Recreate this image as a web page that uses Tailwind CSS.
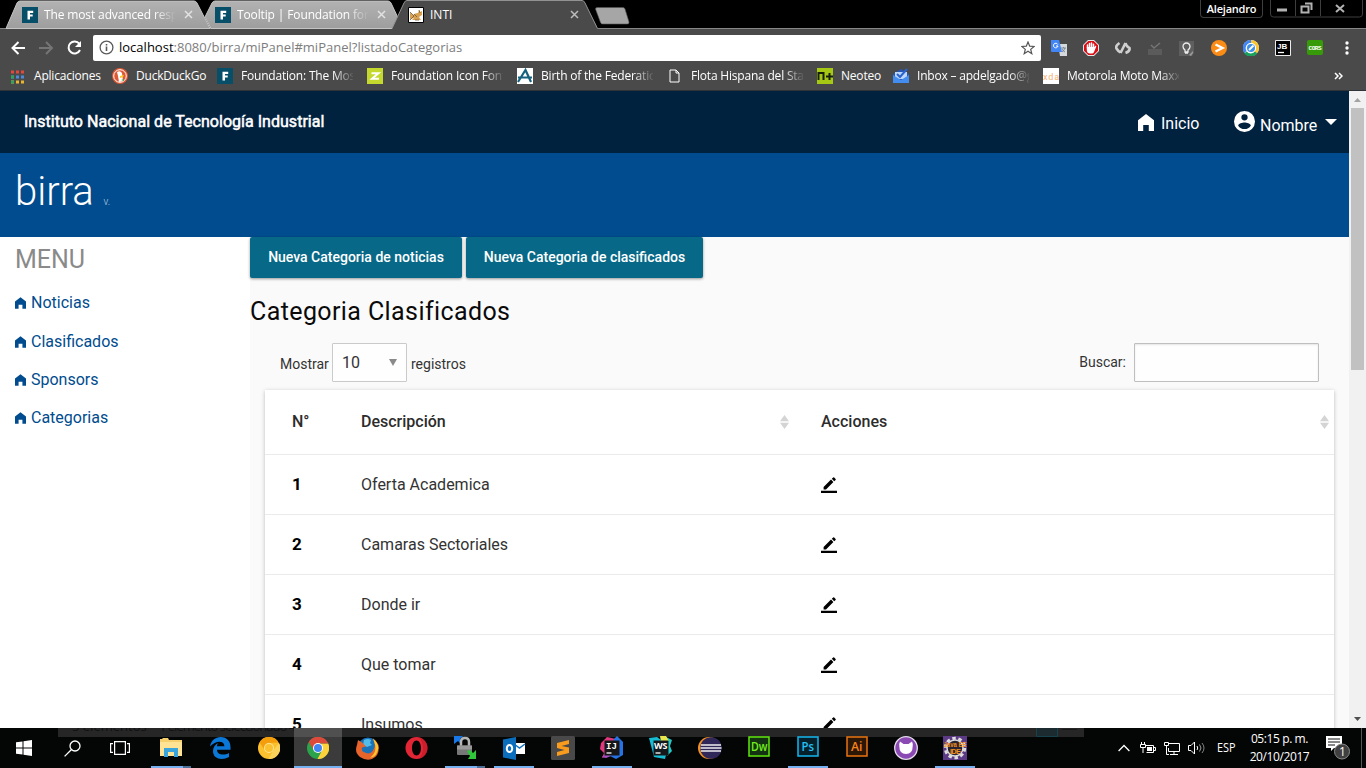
<!DOCTYPE html>
<html lang="es">
<head>
<meta charset="utf-8">
<title>INTI</title>
<script src="https://cdn.jsdelivr.net/npm/@tailwindcss/browser@4"></script>
</head>
<body class="w-[1366px] h-[768px] overflow-hidden bg-black flex flex-col font-['Open_Sans',sans-serif] text-[12px]">
<svg class="hidden">
  <symbol id="home" viewBox="0 0 16 17"><path d="M8 0 0 6.2V17h5.2v-6h5.6v6H16V6.2z" fill="currentColor"/></symbol>
  <symbol id="pen" viewBox="0 0 16 16"><path d="M2.6 12.6V10L10 2.6l2.4 2.4L5 12.6zM10.8 1.8 12.2.5q.5-.4 1 0l1.4 1.4q.4.5 0 1l-1.4 1.3zM0 13.8h16V16H0z" fill="currentColor"/></symbol>
  <symbol id="sort" viewBox="0 0 9 14"><path d="M4.500 0 9 6.300H0zM0 7.700h9L4.500 14z" fill="#d4d4d4"/></symbol>
  <symbol id="fnd" viewBox="0 0 16 16"><path d="M0 0h16v16H0z" fill="#074e68"/><path d="M5.500 3.800h5.700V6H8v1.600h2.700v2H8v2.900H5.500z" fill="#fff"/></symbol>
  <symbol id="x" viewBox="0 0 9 9"><path d="m1 1 7 7M8 1 1 8" stroke="currentColor" stroke-width="1.500"/></symbol>
</svg>

<!-- Tab strip -->
<header class="relative h-[29px] shrink-0 bg-black text-white">
  <svg class="absolute left-0 top-0" width="1366" height="29">
    <defs><linearGradient id="tg" x2="0" y2="1"><stop stop-color="#b2b2b2"/><stop offset="1" stop-color="#9e9e9e"/></linearGradient></defs>
    <path d="M0 28.500h1366" stroke="#868686"/>
    <path d="M205 17 212 3q1-2 3-2h173q2 0 3 2l12 25.500H211z" fill="url(#tg)" stroke="#c4c4c4"/>
    <path d="M6 28.500 17 3q1-2 3-2h174q2 0 3 2l13 25.500z" fill="url(#tg)" stroke="#c4c4c4"/>
    <path d="M392 29 404 3q1-2.500 3-2.500h175q2 0 3 2.500l13 26z" fill="#4a4a4a"/>
    <path d="M392 28.500 404 3q1-2.500 3-2.500h175q2 0 3 2.500l12.500 25.500" fill="none" stroke="#929292"/>
    <path d="M595.500 9q0-1.500 1.500-1.500h26q1.500 0 2 1.500l4 13q.4 2-1.500 2h-25q-1.500 0-2-1.500z" fill="#a6a6a6" stroke="#555" stroke-width=".6"/>
  </svg>
  <div class="relative flex h-[29px] items-center pl-[22px]">
    <div class="flex items-center w-[193px]"><svg class="w-4 h-4 mr-[6px]"><use href="#fnd"/></svg><span class="w-[134px] overflow-hidden whitespace-nowrap tracking-[-0.13px] [mask-image:linear-gradient(to_right,#000_110px,transparent_132px)]">The most advanced respo</span><svg class="w-[9px] h-[9px] ml-[6px] text-[#e2e2e2]"><use href="#x"/></svg></div>
    <div class="flex items-center w-[193px]"><svg class="w-4 h-4 mr-[6px]"><use href="#fnd"/></svg><span class="w-[134px] overflow-hidden whitespace-nowrap tracking-[-0.13px] [mask-image:linear-gradient(to_right,#000_110px,transparent_132px)]">Tooltip | Foundation for Si</span><svg class="w-[9px] h-[9px] ml-[6px] text-[#e2e2e2]"><use href="#x"/></svg></div>
    <div class="flex items-center w-[193px]"><svg class="w-4 h-4 mr-[6px]" viewBox="0 0 16 16"><path d="M.5.500h15v15H.5z" fill="#fff" stroke="#000"/><path d="M2 5.500 5 8q2-2 5-2l1-3 1 2 2-1v4l-3 2 2 3H4l2-2-4 1z" fill="#d9a252"/><path d="m2 5 4 4-4 4m4-6 3 3m2-7 1 3m-5 7h4" stroke="#6c5a3e" fill="none" stroke-width=".8"/></svg><span class="w-[140px]">INTI</span><svg class="w-[9px] h-[9px] text-[#bdbdbd]"><use href="#x"/></svg></div>
  </div>
  <div class="absolute right-0 top-0 flex h-[18px]">
    <div class="w-[63px] h-[18px] border border-t-0 border-[#3e3e3e] rounded-b text-center text-[11px] leading-[18px] font-semibold tracking-[-0.2px] mr-[7px]">Alejandro</div>
    <svg width="96" height="18" fill="none"><path d="M.5 0v14q0 3 3 3h86q3 0 3-3V0M25.500 0v16M50.500 0v16" stroke="#3e3e3e"/><path d="M7 8.500h10v3H7z" fill="#b2b2b2"/><path d="M35 3.500h6.500V10M31.500 6.500h7v6h-7z" stroke="#b2b2b2" stroke-width="2"/><path d="m66 5 8 7m0-7-8 7" stroke="#b2b2b2" stroke-width="2"/></svg>
  </div>
</header>

<!-- Toolbar -->
<div class="h-[33px] shrink-0 bg-[#4a4a4a] flex items-center pt-1 pl-[10px]">
  <svg width="83" height="20" fill="none" stroke-width="2"><path d="M15 10H2.500M8.500 4l-6 6 6 6" stroke="#fff"/><path d="M29 10h12.500M36 4l6 6-6 6" stroke="#757575"/><path d="M69.300 5.700A6 6 0 1 0 70 12" stroke="#fff"/><path d="M71 3v6h-6z" fill="#fff"/></svg>
  <div class="w-[948px] h-[26px] bg-white rounded-[2px] flex items-center pl-[6px] mr-[10px]">
    <svg width="15" height="15" fill="none" stroke="#5a5a5a"><circle cx="7.500" cy="7.500" r="6.400" stroke-width="1.300"/><path d="M7.500 6.500V11M7.500 4v1.500" stroke-width="1.600"/></svg>
    <span class="ml-[5px] text-[13px] tracking-[0.01px] text-[#7d7d7d] flex-1"><span class="text-black">localhost</span>:8080/birra/miPanel#miPanel?listadoCategorias</span>
    <svg class="mr-[6px]" width="14" height="14" viewBox="0 0 14 14"><path d="m7 1 1.700 4.200 4.500.3-3.500 2.900 1.100 4.300L7 10.300l-3.800 2.400 1.100-4.300L.8 5.500l4.500-.3z" fill="none" stroke="#555" stroke-width="1.200"/></svg>
  </div>
  <div class="flex gap-4">
    <svg width="16" height="16"><path d="M7 4h9v12H9z" fill="#d5d9dd"/><path d="M0 0h8l3 12H1q-1 0-1-1z" fill="#4285f4"/><path d="M6.800 4.500A2.300 2.300 0 1 0 7 6H5" stroke="#fff" fill="none"/><path d="M10 8h5m-2.500-1v1m1.500 0q-1 3-3 4m0-3q1 2 3 3" stroke="#6b7a86" fill="none" stroke-width=".8"/></svg>
    <svg width="16" height="16"><path d="M5 0h6l5 5v6l-5 5H5l-5-5V5z" fill="#e5e5e5"/><path d="M5.300 1h5.400L15 5.300v5.400L10.700 15H5.300L1 10.700V5.300z" fill="#d80f16"/><path d="M4.500 8V5m2 3V3.500m2 4V3m2 5V4.200" stroke="#fff" stroke-width="1.500" stroke-linecap="round"/><path d="M3.800 7h7.400l1.600-1.400.5.800L11 12q-.6 1.500-2 1.500H7q-3 0-3.200-3.500z" fill="#fff"/></svg>
    <svg width="16" height="16" fill="none" stroke="#cfcfcf" stroke-width="2.600"><path d="M4.500 3Q0 6 1.500 8.500t4 4M10.500 3l-5 10M10.500 3q1 4 4 5 .8 3-4 5"/></svg>
    <svg width="16" height="16"><path d="M1 9h14v6H1z" fill="#5b5b5b"/><path d="m4 5 3 3 6-5" fill="none" stroke="#747474" stroke-width="1.500"/></svg>
    <svg width="16" height="16"><path d="M0 1h15v12l-2 3H0z" fill="#5f5f5f"/><path d="M6 10q-2-1.500-2-3.500a3.500 3.500 0 0 1 7 0q0 2-2 3.500v2H6zM6 13h3" fill="none" stroke="#eee" stroke-width="1.300"/><path d="m10 15 4-4v2l-2 3z" fill="#999"/></svg>
    <svg width="16" height="16"><circle cx="8" cy="8" r="8" fill="#fb8c16"/><path d="m4.500 4.500 7 3.500-7 3.500" fill="none" stroke="#fff" stroke-width="2.400"/></svg>
    <svg width="16" height="16" fill="none"><circle cx="8" cy="8" r="8" fill="#fff"/><path d="M2.500 12A6.600 6.600 0 0 1 8 1.500" stroke="#4285f4" stroke-width="3"/><path d="M8 1.500A6.500 6.500 0 0 1 12 13" stroke="#fbc52d" stroke-width="3"/><path d="M13 12.300a6.500 6.500 0 0 1-10.500 0" stroke="#18a05d" stroke-width="3"/><circle cx="8" cy="8" r="5" fill="#fff"/><circle cx="8" cy="8" r="4" fill="#3e91e8"/><path d="m6 10 4.500-4.500" stroke="#fff" stroke-width="1.800"/></svg>
    <svg width="16" height="16"><path d="M.5.500h15v15H.5z" stroke="#ececec"/><text x="2" y="8.500" fill="#fff" font-size="8" font-weight="700" font-family="Liberation Sans">JB</text><path d="M3 12.500h6" stroke="#fff" stroke-width="1.300"/></svg>
    <svg width="16" height="16"><rect width="16" height="15" rx="2" fill="#379a08"/><text x="1.500" y="10" fill="#fff" font-size="6" font-weight="700" textLength="13" font-family="Liberation Mono">CORS</text></svg>
    <svg class="ml-[6px]" width="4" height="16" fill="#fff"><circle cx="2" cy="3" r="1.700"/><circle cx="2" cy="8" r="1.700"/><circle cx="2" cy="13" r="1.700"/></svg>
  </div>
</div>

<!-- Bookmarks -->
<nav class="h-[29px] shrink-0 bg-[#4a4a4a] border-b border-[#303338] flex items-center pl-[10px] text-white whitespace-nowrap tracking-[-0.2px]">
  <div class="flex items-center w-[102px]"><svg class="mr-[9px]" width="15" height="15"><path d="M1 3h13" stroke="#e4473c" stroke-width="3" stroke-dasharray="3 2"/><path d="M1 8h13" stroke="#4c8bdc" stroke-width="3" stroke-dasharray="3 2"/><path d="M1 13h13" stroke="#ecb52f" stroke-width="3" stroke-dasharray="3 2"/><path d="M1 6.500h3v3H1zM1 11.500h3v3H1z" fill="#2ea35b"/></svg>Aplicaciones</div>
  <div class="flex items-center w-[105px]"><svg class="mr-2" width="16" height="16"><circle cx="8" cy="8" r="8" fill="#de5833"/><circle cx="8" cy="8" r="6.300" fill="none" stroke="#fff"/><path d="M5 4q3-2 5 1l1 8-4 1-1-6z" fill="#fff"/><path d="m8 8 4-1-1 2-3 1z" fill="#ffc91e"/><path d="m9 12 3-1v2z" fill="#44a047"/></svg>DuckDuckGo</div>
  <div class="flex items-center w-[150px]"><svg class="w-4 h-4 mr-2"><use href="#fnd"/></svg><span class="w-[112px] overflow-hidden [mask-image:linear-gradient(to_right,#000_92px,transparent_114px)]">Foundation: The Most</span></div>
  <div class="flex items-center w-[150px]"><svg class="mr-2" width="16" height="16"><path d="M0 0h16v16H0z" fill="#c4d82e"/><path d="M4.500 5.200h7L5 10.800h7" fill="none" stroke="#fff" stroke-width="2"/></svg><span class="w-[112px] overflow-hidden [mask-image:linear-gradient(to_right,#000_92px,transparent_114px)]">Foundation Icon Fonts</span></div>
  <div class="flex items-center w-[150px]"><svg class="mr-2" width="16" height="16"><path d="M0 0h16v16H0z" fill="#fff"/><path d="M1 14 8.500 2l5.500 12M1 9.500h14" stroke="#16617e" stroke-width="2.200" fill="none"/></svg><span class="w-[112px] overflow-hidden [mask-image:linear-gradient(to_right,#000_92px,transparent_114px)]">Birth of the Federation</span></div>
  <div class="flex items-center w-[150px] pl-[2px]"><svg class="mr-[11px]" width="11" height="14"><path d="M1 1h6l3 3v9H1zM7 1v3h3" stroke="#fff" fill="none"/></svg><span class="w-[112px] overflow-hidden [mask-image:linear-gradient(to_right,#000_92px,transparent_114px)]">Flota Hispana del Star</span></div>
  <div class="flex items-center w-[76px]"><svg class="mr-2" width="16" height="16"><path d="M0 0h16v16H0z" fill="#a4c814"/><path d="M1.500 12V5h5v7M9 8.500h7M12.500 5v7" stroke="#16200a" stroke-width="2" fill="none"/></svg>Neoteo</div>
  <div class="flex items-center w-[150px]"><svg class="mr-2" width="16" height="16"><path d="m0 6 8-5 8 5v9H0z" fill="#2457b8"/><path d="M2 4h12v7H2z" fill="#bdd7fb"/><path d="m4 6 3 3 7-8" stroke="#2b63cf" stroke-width="2" fill="none"/><path d="m0 7 8 5 8-5v8H0z" fill="#438cf0"/></svg><span class="w-[112px] overflow-hidden [mask-image:linear-gradient(to_right,#000_92px,transparent_114px)]">Inbox – apdelgado@g</span></div>
  <div class="flex items-center w-[291px]"><svg class="mr-2" width="16" height="16"><path d="M0 0h16v16H0z" fill="#fff"/><text x="0" y="11.500" font-size="9" textLength="16" fill="#f4b177" font-family="Roboto">xda</text></svg><span class="w-[112px] overflow-hidden [mask-image:linear-gradient(to_right,#000_92px,transparent_114px)]">Motorola Moto Maxx X</span></div>
  <svg width="9" height="8"><path d="m1 1 3 3-3 3m4-6 3 3-3 3" fill="none" stroke="#fff" stroke-width="1.500"/></svg>
</nav>

<!-- Page -->
<div class="h-[637px] shrink-0 flex overflow-hidden font-[Roboto,sans-serif] text-[16px] bg-[#fafafa]">
  <div class="w-[1349px] shrink-0">
    <div class="h-[62px] bg-[#00223f] text-white flex items-center pl-6">
      <div class="w-[1114px] tracking-[0.02px] [-webkit-text-stroke:0.5px_white]">Instituto Nacional de Tecnología Industrial</div>
      <svg class="w-4 h-[17px] mr-[7px]"><use href="#home"/></svg><span class="w-[73px] pt-[3px]">Inicio</span>
      <svg class="mr-[5px] -mt-px" width="21" height="21" viewBox="2 2 20 20"><path fill="#fff" d="M12 2a10 10 0 1 0 0 20 10 10 0 0 0 0-20zm0 3a3 3 0 1 1 0 6 3 3 0 0 1 0-6zm0 14.200a7.200 7.200 0 0 1-6-3.200c0-2 4-3.100 6-3.100s6 1.100 6 3.100a7.200 7.200 0 0 1-6 3.200z"/></svg><span class="pt-[7px] w-[65px]">Nombre</span>
      <svg width="12" height="6"><path d="M0 0h12L6 6z" fill="#fff"/></svg>
    </div>
    <div class="h-[84px] bg-[#004c8e] text-white pl-[15px] pt-[11px] font-light text-[40px] leading-[56px]">birra <span class="text-[10px] text-[#b8cfe2]">v.</span></div>
    <div class="flex h-[491px]">
      <aside class="w-[250px] bg-white pl-[15px] text-[#004c8e]">
        <h2 class="text-[25px] leading-[35px] pt-[5px] text-[#8a8a8a]">MENU</h2>
        <div class="mt-[7px] flex flex-col">
          <a class="h-[38.400px] flex items-center"><svg class="w-[11px] h-3 mr-[5px]"><use href="#home"/></svg>Noticias</a>
          <a class="h-[38.400px] flex items-center"><svg class="w-[11px] h-3 mr-[5px]"><use href="#home"/></svg>Clasificados</a>
          <a class="h-[38.400px] flex items-center"><svg class="w-[11px] h-3 mr-[5px]"><use href="#home"/></svg>Sponsors</a>
          <a class="h-[38.400px] flex items-center"><svg class="w-[11px] h-3 mr-[5px]"><use href="#home"/></svg>Categorias</a>
        </div>
      </aside>
      <main class="flex-1">
        <div class="flex gap-1 text-white font-medium text-[14px]">
          <div class="h-[41px] w-[212px] bg-[#076987] rounded-[2px] shadow-[0_1px_3px_rgba(0,0,0,.4)] flex items-center justify-center">Nueva Categoria de noticias</div>
          <div class="h-[41px] w-[237px] bg-[#076987] rounded-[2px] shadow-[0_1px_3px_rgba(0,0,0,.4)] flex items-center justify-center">Nueva Categoria de clasificados</div>
        </div>
        <h1 class="text-[25px] leading-[35px] mt-4 text-[#0a0a0a] tracking-[0.4px]">Categoria Clasificados</h1>
        <div class="mt-[14px] h-[39px] flex items-center pl-[30px] pr-[30px] text-[14px] text-[#333]">
          <span class="w-[52px] pt-[3px]">Mostrar</span>
          <div class="w-[75px] h-[39px] border border-[#cacaca] rounded-[1px] bg-[#fefefe] flex items-center justify-between pl-[9px] pr-[9px] text-[16px]">10<svg width="8" height="7"><path d="M0 0h8L4 7z" fill="#8a8a8a"/></svg></div>
          <span class="ml-1 flex-1 pt-[3px]">registros</span>
          <span class="mr-2">Buscar:</span>
          <div class="w-[185px] h-[39px] border border-[#bfbfbf] rounded-[1px] bg-[#fefefe] shadow-[inset_0_1px_2px_rgba(10,10,10,.1)]"></div>
        </div>
        <div class="ml-[15px] mt-2 w-[1069px] h-[400px] bg-white shadow-[0_1px_4px_rgba(0,0,0,.25)] text-[#333]">
          <div class="h-[65px] border-b border-[#ebebeb] flex items-center font-medium text-[#2c2c2c]"><span class="w-[69px] ml-[27px]">N°</span><span class="w-[419px]">Descripción</span><svg class="w-[9px] h-[14px] mr-8"><use href="#sort"/></svg><span class="w-[499px]">Acciones</span><svg class="w-[9px] h-[14px]"><use href="#sort"/></svg></div>
          <div class="h-[60px] border-b border-[#ebebeb] flex items-center"><b class="w-[69px] ml-[27px] text-[17px] text-black">1</b><span class="w-[460px]">Oferta Academica</span><svg class="w-4 h-4 text-black"><use href="#pen"/></svg></div>
          <div class="h-[60px] border-b border-[#ebebeb] flex items-center"><b class="w-[69px] ml-[27px] text-[17px] text-black">2</b><span class="w-[460px]">Camaras Sectoriales</span><svg class="w-4 h-4 text-black"><use href="#pen"/></svg></div>
          <div class="h-[60px] border-b border-[#ebebeb] flex items-center"><b class="w-[69px] ml-[27px] text-[17px] text-black">3</b><span class="w-[460px]">Donde ir</span><svg class="w-4 h-4 text-black"><use href="#pen"/></svg></div>
          <div class="h-[60px] border-b border-[#ebebeb] flex items-center"><b class="w-[69px] ml-[27px] text-[17px] text-black">4</b><span class="w-[460px]">Que tomar</span><svg class="w-4 h-4 text-black"><use href="#pen"/></svg></div>
          <div class="h-[60px] border-b border-[#ebebeb] flex items-center"><b class="w-[69px] ml-[27px] text-[17px] text-black">5</b><span class="w-[460px]">Insumos</span><svg class="w-4 h-4 text-black"><use href="#pen"/></svg></div>
        </div>
      </main>
    </div>
  </div>
  <div class="w-[17px] bg-[#f1f1f1] flex flex-col items-center">
    <svg class="mt-[7px] mb-[6px] shrink-0" width="7" height="4"><path d="M0 4h7L3.500 0z" fill="#a3a3a3"/></svg>
    <div class="w-[13px] h-[262px] bg-[#c1c1c1]"></div>
    <svg class="mt-auto mb-[7px]" width="7" height="4"><path d="M0 0h7L3.500 4z" fill="#505050"/></svg>
  </div>
</div>

<!-- Taskbar -->
<footer class="relative h-10 shrink-0 bg-[#040605] text-white flex overflow-hidden">
  <div class="absolute left-[58px] top-0 w-[1026px] h-[9px] bg-[#262626] overflow-hidden text-[#0d0f10] text-[13px]">
    <svg width="1026" height="9"><g fill="#101214" font-size="13" font-family="Open Sans"><text x="14" y="3">5 elementos</text><text x="101" y="3" textLength="169">1 elemento seleccionado 4,44 KB</text></g><path d="M978.500 0v8.500h21V0" fill="#1c2b30" stroke="#17414c"/><path d="M1004 1.500h15" stroke="#181818"/></svg>
  </div>
  <div class="relative flex w-full items-stretch">
    <div class="w-12 flex items-center justify-center"><svg width="16" height="16" fill="#fff"><path d="m0 2.300 6.500-.9v6.100H0zM7.500 1.200 16 0v7.500H7.500zM0 8.500h6.500v6.100L0 13.700zM7.500 8.500H16V16l-8.500-1.200z"/></svg></div>
    <div class="w-12 flex items-center justify-center"><svg width="17" height="17" fill="none" stroke="#fff" stroke-width="1.300"><circle cx="11" cy="6" r="5"/><path d="M7.500 9.500.6 16.400"/></svg></div>
    <div class="w-12 flex items-center justify-center mr-[3px]"><svg width="20" height="14" fill="none" stroke="#fff" stroke-width="1.200"><path d="M4.600.600h10.800v12.800H4.600zM3 2.600H.6v8.800H3M17 2.600h2.400v8.800H17"/></svg></div>

    <div class="relative w-12 mr-px flex items-center justify-center"><svg width="22" height="20"><path d="M0 1h2l1-1h5l1 2h13v15H0z" fill="#f5d06c"/><path d="M0 4h22v14H0z" fill="#fde393"/><path d="M4 10h14v9h-4v-5H8v5H4z" fill="#3aa5dc"/></svg><i class="absolute bottom-0 left-1 w-8 h-[2px] bg-[#76b0f0]"></i><i class="absolute bottom-0 left-9 w-2 h-[2px] bg-[#4c6f98]"></i></div>
    <div class="w-12 mr-px flex items-center justify-center"><svg width="21" height="22" viewBox="0 0 21 22"><path d="M0 9.500C1 3.500 5.500 0 10.700 0 17 0 20.500 4.500 20.500 10v2.700H7c0 5.500 7.500 6 12 3.300V20c-6.500 3.500-16 2.500-16-6C3 10.300 5 7.500 8.500 6 7.500 7 7 8 6.900 9.200h7.500c0-6-8.900-6-14.400.3z" fill="#0b78d7"/></svg></div>
    <div class="w-12 mr-px flex items-center justify-center"><svg width="22" height="22"><circle cx="11" cy="11" r="11" fill="#fbc02d"/><path d="M1.500 5.500A11 11 0 0 1 20.600 5.500L11 6Q6 7 6 12z" fill="#f59e0b"/><path d="M21 6 15 14l-4.500 8A11 11 0 0 0 21 6" fill="#fdd45a"/><circle cx="11" cy="11" r="5" fill="#ffe394"/><circle cx="11" cy="11" r="4" fill="#fbc02d"/></svg></div>
    <div class="relative w-12 mr-px flex items-center justify-center bg-[#3b3b3b]"><div class="absolute top-0 inset-x-0 h-[9px] bg-[#505050]"></div><svg class="relative" width="22" height="22"><circle cx="11" cy="11" r="11" fill="#2ba24c"/><path d="M21.200 6.500A11 11 0 0 1 10.500 22L15 13.500 14 6.500z" fill="#fdd33c"/><path d="M1.800 5A11 11 0 0 1 21.200 6.500H11L6.500 13z" fill="#dd4a3c"/><circle cx="11" cy="11" r="5" fill="#fff"/><circle cx="11" cy="11" r="4" fill="#4285f4"/></svg><i class="absolute bottom-0 left-0 w-12 h-[2px] bg-[#76b0f0]"></i></div>
    <div class="w-12 mr-px flex items-center justify-center"><svg width="23" height="23"><circle cx="12" cy="10.500" r="10" fill="#1a72b8"/><path d="M8 3q4-2 7 0l-1 3 2 2-5 2-4-2z" fill="#54bce8"/><path d="M2 3 1 8q-3 7 3 12 6 4 12 2 8-3 6.500-14Q21 4 17 1.500q3 6 1 10-3 7-9 4-4-1-3-5l4-1-4-4z" fill="#e9642b"/><path d="M17 1.500q8 7 4 14-2 5-7 5 7-5 5-13z" fill="#fbc72f"/></svg></div>
    <div class="w-12 mr-px flex items-center justify-center"><svg width="23" height="22"><path fill-rule="evenodd" d="M11.500 0a11 11 0 1 0 0 22 11 11 0 1 0 0-22zm0 3.500c2.700 0 4.500 3.400 4.500 7.500s-1.800 7.500-4.500 7.500S7 15.100 7 11s1.800-7.500 4.500-7.500z" fill="#e32636"/><path d="M14 .4q8.500 2 8.500 10.600T14 21.600q4-4 4-10.600T14 .4z" fill="#b31322" opacity=".5"/></svg></div>
    <div class="relative w-12 mr-px flex items-center justify-center"><svg width="24" height="24"><path d="M1 0h9L7 3l2 3-2 1-2-2-4 3z" fill="#1878e8"/><path d="M8 11V6q0-4 4-4t4 4v5" fill="none" stroke="#b5b5b5" stroke-width="2.500"/><rect x="4" y="9.500" width="15" height="9.500" rx="1" fill="#777"/><rect x="4" y="9.500" width="15" height="4" fill="#999"/><path d="m14 15 3-1 3 3 3-3v9h-8l2-3z" fill="#30c83a"/></svg><i class="absolute bottom-0 left-1 w-8 h-[2px] bg-[#76b0f0]"></i><i class="absolute bottom-0 left-9 w-2 h-[2px] bg-[#4c6f98]"></i></div>
    <div class="relative w-12 mr-px flex items-center justify-center"><svg width="24" height="23"><path d="M12 6h11v11H12z" fill="#fff"/><path d="m12 7 5.500 4L23 7" fill="none" stroke="#1072c0" stroke-width="1.500"/><path d="m1 2.500 13-2.500v23L1 20.500z" fill="#0a6ebd"/><ellipse cx="7.500" cy="11.500" rx="2.700" ry="3.600" fill="none" stroke="#fff" stroke-width="2"/></svg><i class="absolute bottom-0 left-1 w-10 h-[2px] bg-[#76b0f0]"></i></div>
    <div class="w-12 mr-px flex items-center justify-center"><svg width="24" height="24"><rect width="24" height="24" rx="1.500" fill="#494949"/><path d="m6 7 12-3v4l-7.500 2L18 11.500V17L6 20v-4l7.500-2L6 12z" fill="#f99b1c"/></svg></div>
    <div class="relative w-12 mr-px flex items-center justify-center"><svg width="24" height="24"><path d="m1 7 6-6 9 2-8 17-6 2 2-5-4-4z" fill="#e0387f"/><path d="m14 3 3-3 6 6v13l-7 4-8-4z" fill="#2673e5"/><path d="M2 21 6 17l5 3-5 2z" fill="#a650c4"/><path d="M4.500 4.500h15v15h-15z" fill="#161616"/><path d="M6.500 17h5" stroke="#fff" stroke-width="1.300"/><text x="6" y="13" font-size="9" font-weight="700" fill="#fff" font-family="Liberation Mono">IJ</text></svg><i class="absolute bottom-0 left-1 w-10 h-[2px] bg-[#76b0f0]"></i></div>
    <div class="w-12 mr-px flex items-center justify-center"><svg width="24" height="24"><path d="m0 2 8-1 4 3 5 15-1 4-11-2z" fill="#17bdd4"/><path d="m12 0 5 1 6 3-2 6 2 5-5 5z" fill="#25c7c7"/><path d="M11 0h6l3 5-8 1z" fill="#e7e64c"/><path d="M4.500 4.500h15v15h-15z" fill="#14181a"/><path d="M6.500 17h5" stroke="#fff" stroke-width="1.300"/><text x="5" y="13" font-size="9" font-weight="700" textLength="13.500" fill="#fff" font-family="Open Sans">WS</text></svg></div>
    <div class="w-12 mr-px flex items-center justify-center"><svg width="24" height="22"><circle cx="11" cy="11" r="11" fill="#f39222"/><circle cx="13" cy="11" r="10.800" fill="#2f2858"/><path d="M3 8h20M2.500 11h21M3 14h20" stroke="#eee" stroke-width="1.400"/></svg></div>
    <div class="w-12 mr-px flex items-center justify-center"><svg class="-mt-[3px]" width="22" height="21"><path d="M1 1h20v19H1z" fill="#143312" stroke="#5fe80c" stroke-width="1.500"/><text x="3" y="15" font-size="12" textLength="16.500" lengthAdjust="spacingAndGlyphs" fill="#72f01b" font-weight="600" font-family="Open Sans">Dw</text></svg></div>
    <div class="relative w-12 mr-px flex items-center justify-center"><svg class="-mt-[3px]" width="22" height="21"><path d="M1 1h20v19H1z" fill="#06212c" stroke="#14b6ee" stroke-width="1.500"/><text x="4.500" y="15" font-size="12" textLength="12.500" lengthAdjust="spacingAndGlyphs" fill="#22c3f5" font-weight="600" font-family="Open Sans">Ps</text></svg><i class="absolute bottom-0 left-1 w-10 h-[2px] bg-[#76b0f0]"></i></div>
    <div class="w-12 mr-px flex items-center justify-center"><svg class="-mt-[3px]" width="22" height="21"><path d="M1 1h20v19H1z" fill="#2c1606" stroke="#e87410" stroke-width="1.500"/><text x="5" y="15" font-size="12" textLength="11.500" lengthAdjust="spacingAndGlyphs" fill="#f5831c" font-weight="600" font-family="Open Sans">Ai</text></svg></div>
    <div class="w-12 mr-px flex items-center justify-center"><svg width="24" height="24"><circle cx="12" cy="12" r="11.300" fill="#8b49b4" stroke="#e4dcea" stroke-width="1.300"/><path d="M6 5.500 9.500 8h5L18 5.500q1 2 .7 4.500 0 8-6.700 8t-6.700-8Q5 7.500 6 5.500z" fill="#fff"/></svg></div>
    <div class="relative w-12 mr-px flex items-center justify-center"><svg width="24" height="24"><path d="M0 0h24v24H0z" fill="#5c3a86"/><circle cx="12" cy="12" r="9.700" fill="none" stroke="#ddd" stroke-width="3" stroke-dasharray="3.500 2.600"/><circle cx="12" cy="12" r="8" fill="#2a2330" stroke="#ddd" stroke-width="1.500"/><g fill="#f29222" font-weight="700" font-family="Liberation Sans" font-size="7.500"><text x=".5" y="11" textLength="23" lengthAdjust="spacingAndGlyphs">Java EE</text><text x="7" y="17.500" textLength="11">IDE</text></g></svg><i class="absolute bottom-0 left-1 w-10 h-[2px] bg-[#76b0f0]"></i></div>

    <div class="ml-auto flex items-center">
      <svg class="mr-[10px]" width="12" height="8" fill="none" stroke="#fff" stroke-width="1.300"><path d="m.6 7 5.400-5.500L11.400 7"/></svg>
      <svg class="mr-2" width="16" height="12" fill="none" stroke="#fff"><path d="M5.500 3.500h8v7h-7M14 5.500h1.500v3H14M1.500 0v2.500M4.500 0v2.500M.5 2.500h5v3h-5zM3 6v5"/><path d="M7 5h5v4H7z" fill="#fff" stroke="none"/></svg>
      <svg class="mr-2" width="16" height="13" fill="none" stroke="#fff"><path d="M5 1.500h10.500v8H4.500V6M10 10v2M6 12.500h8M.5.500h4v3h-4zM2.500 4v8.500H5"/></svg>
      <svg class="mr-[12px]" width="17" height="14" fill="none" stroke="#fff"><path d="M.5 4.500H3L6.500 1v12L3 9.500H.5zM9 5q1.500 2 0 4"/><path d="M11.500 3.500q3 3.500 0 7" opacity=".6"/><path d="M14 2q4 5 0 10" opacity=".5"/></svg>
      <span class="w-[19px] text-[12px]"><svg width="19" height="14"><text x="0" y="11" font-size="12" textLength="18.500" lengthAdjust="spacingAndGlyphs" fill="#fff">ESP</text></svg></span>
      <div class="ml-[13px] w-[61px] text-center text-[12px] leading-[18px] tracking-[-0.4px] whitespace-nowrap">05:15 p. m.<br>20/10/2017</div>
      <svg class="ml-[16px]" width="24" height="24"><path d="M0 0h16v12H8l-3 3v-3H0z" fill="#fff"/><path d="M2 3h12M2 6h12M2 9h7" stroke="#111"/><circle cx="16" cy="15.500" r="7.500" fill="#404040" stroke="#8a8a8a"/><text x="13" y="20" font-size="12" fill="#fff">1</text></svg>
      <i class="ml-[11px] mr-1 w-px h-10 bg-[#555]"></i>
    </div>
  </div>
</footer>
</body>
</html>
